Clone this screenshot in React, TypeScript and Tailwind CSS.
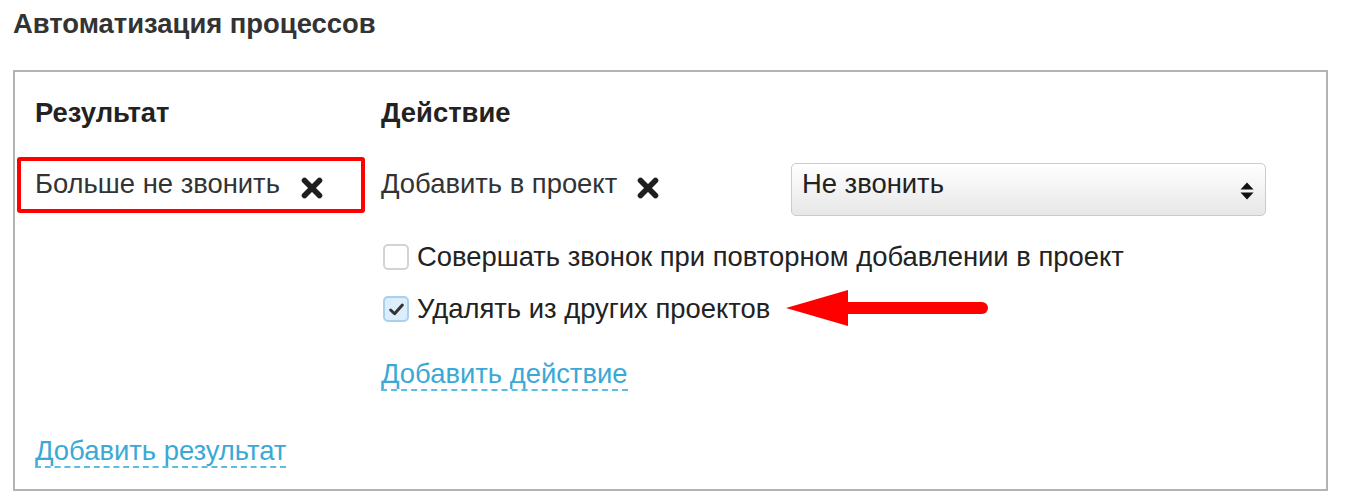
import React from 'react'

const font = { fontFamily: '"Liberation Sans", Arial, sans-serif' }

function Cross({ className = '' }: { className?: string }) {
  return (
    <svg viewBox="0 0 24 22" className={`h-[22px] w-[24px] shrink-0 ${className}`}>
      <path d="M4.5 3.5 L19.5 18.5 M19.5 3.5 L4.5 18.5" stroke="#1f1f1f" strokeWidth="5.6" strokeLinecap="round" fill="none" />
    </svg>
  )
}

function Checkbox({ checked, label }: { checked?: boolean; label: string }) {
  return (
    <label className="flex items-center gap-[8px] text-[27.4px] leading-[32px] text-[#222]">
      <span
        className={
          checked
            ? 'ml-[2px] flex h-[26px] w-[26px] items-center justify-center rounded-[5px] border-2 border-[#a9d0ec] bg-[#dcedfb]'
            : 'ml-[2px] h-[26px] w-[26px] rounded-[5px] border-2 border-[#d3d3d3] bg-white'
        }
      >
        {checked && (
          <svg viewBox="0 0 16 16" className="h-[17px] w-[17px]">
            <path d="M2.5 8.5 L6.2 12 L13.5 3.8" fill="none" stroke="#333" strokeWidth="2.8" strokeLinecap="round" strokeLinejoin="round" />
          </svg>
        )}
      </span>
      {label}
    </label>
  )
}

function DashedLink({ children, className = '' }: { children: React.ReactNode; className?: string }) {
  return (
    <div className={`text-[27.4px] leading-[32px] text-[#3aa9d6] ${className}`}>
      <span className="border-b-2 border-dashed border-[#5bbde2]">{children}</span>
    </div>
  )
}

export default function App() {
  return (
    <div className="min-h-[503px] bg-white pt-[8px] pl-[13px]" style={font}>
      <h2 className="text-[27.4px] font-bold leading-[32px] text-[#333]">Автоматизация процессов</h2>

      <div className="relative mt-[30px] h-[421px] w-[1315px] border-2 border-[#b3b3b3] pt-[25px] pl-[20px]">
        <div className="flex">
          <div className="w-[346px]">
            <div className="text-[27.4px] font-bold leading-[32px] text-[#222]">Результат</div>
            <div className="mt-[39px] flex items-start text-[27.4px] leading-[32px] text-[#333]">
              <span>Больше не звонить</span>
              <Cross className="mt-[9px] ml-[20px]" />
            </div>
          </div>

          <div>
            <div className="text-[27.4px] font-bold leading-[32px] text-[#222]">Действие</div>
            <div className="mt-[34px] flex items-start">
              <div className="mt-[5px] flex w-[410px] items-start text-[27.4px] leading-[32px] text-[#333]">
                <span>Добавить в проект</span>
                <Cross className="mt-[9px] ml-[19px]" />
              </div>
              <div className="flex h-[53px] w-[475px] items-start justify-between rounded-[5px] border border-[#cbcbcb] bg-gradient-to-b from-white to-[#e7e7e7] pt-[4px] pr-[11px] pl-[10px] text-[27.4px] leading-[32px] text-[#222]">
                <span>Не звонить</span>
                <svg viewBox="0 0 14 18" className="mt-[14px] h-[18px] w-[14px]">
                  <path d="M7 0.5 L13.5 7.5 L0.5 7.5 Z M0.5 10.5 L13.5 10.5 L7 17.5 Z" fill="#111" />
                </svg>
              </div>
            </div>
            <div className="mt-[25px] flex flex-col gap-[16px]">
              <Checkbox label="Совершать звонок при повторном добавлении в проект" />
              <div className="flex items-center">
                <Checkbox checked label="Удалять из других проектов" />
                <svg viewBox="0 0 202 40" className="ml-[16px] h-[40px] w-[202px]">
                  <path d="M0 19 L62 1 L62 37 Z" fill="#ff0000" />
                  <line x1="60" y1="19" x2="196" y2="19" stroke="#ff0000" strokeWidth="12" strokeLinecap="round" />
                </svg>
              </div>
            </div>
            <DashedLink className="mt-[29px]">Добавить действие</DashedLink>
          </div>
        </div>

        <DashedLink className="mt-[45px]">Добавить результат</DashedLink>

        <div className="pointer-events-none absolute top-[85px] left-[2px] h-[56px] w-[348px] rounded-[3px] border-4 border-[#ff0000]" />
      </div>
    </div>
  )
}
